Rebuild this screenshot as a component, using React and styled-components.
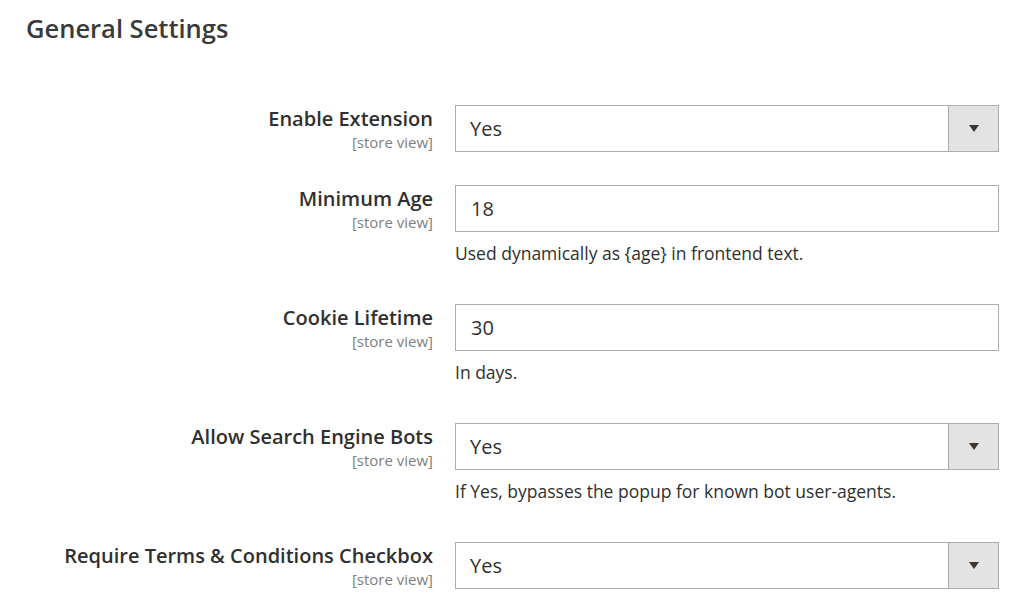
import React from "react";
import styled, { createGlobalStyle } from "styled-components";

const GlobalStyle = createGlobalStyle`
  body {
    margin: 0;
    background: #ffffff;
    font-family: "Open Sans", "Liberation Sans", sans-serif;
    color: #303030;
  }
`;

const fields = [
  { label: "Enable Extension", type: "select", value: "Yes" },
  {
    label: "Minimum Age",
    type: "input",
    value: "18",
    note: "Used dynamically as {age} in frontend text.",
  },
  { label: "Cookie Lifetime", type: "input", value: "30", note: "In days." },
  {
    label: "Allow Search Engine Bots",
    type: "select",
    value: "Yes",
    note: "If Yes, bypasses the popup for known bot user-agents.",
  },
  { label: "Require Terms & Conditions Checkbox", type: "select", value: "Yes" },
];

const SettingsPage = () => {
  return (
    <Page>
      <GlobalStyle />
      <Title>General Settings</Title>
      <Fieldset>
        {fields.map((field) => (
          <Row key={field.label}>
            <LabelCell>
              <LabelText>{field.label}</LabelText>
              <Scope>[store view]</Scope>
            </LabelCell>
            <ValueCell>
              {field.type === "select" ? (
                <SelectBox>
                  <SelectValue>{field.value}</SelectValue>
                  <ArrowButton>
                    <svg width="10" height="7" viewBox="0 0 10 7">
                      <path d="M0 0 L10 0 L5 7 Z" fill="#41362f" />
                    </svg>
                  </ArrowButton>
                </SelectBox>
              ) : (
                <TextBox>{field.value}</TextBox>
              )}
              {field.note && <Note>{field.note}</Note>}
            </ValueCell>
          </Row>
        ))}
      </Fieldset>
    </Page>
  );
};

const Page = styled.div`
  width: 1024px;
  height: 600px;
  overflow: hidden;
  box-sizing: border-box;
`;

const Title = styled.h2`
  margin: 0;
  padding: 12px 0 0 26px;
  font-size: 25.5px;
  line-height: 32px;
  font-weight: 600;
  color: #3a3a3a;
`;

const Fieldset = styled.div`
  display: flex;
  flex-direction: column;
  gap: 33px;
  padding-top: 61px;
`;

const Row = styled.div`
  display: grid;
  grid-template-columns: 433px 544px;
  column-gap: 22px;
`;

const LabelCell = styled.div`
  display: flex;
  flex-direction: column;
  align-items: flex-end;
  padding-top: 2px;
`;

const LabelText = styled.div`
  font-size: 20px;
  line-height: 24px;
  font-weight: 600;
  color: #303030;
  white-space: nowrap;
`;

const Scope = styled.div`
  margin-top: 2px;
  font-size: 15px;
  line-height: 18px;
  color: #808080;
`;

const ValueCell = styled.div`
  display: flex;
  flex-direction: column;
`;

const boxBase = `
  height: 47px;
  box-sizing: border-box;
  border: 1px solid #adadad;
  background: #ffffff;
  font-size: 20px;
  color: #303030;
`;

const SelectBox = styled.div`
  ${boxBase}
  display: flex;
  align-items: stretch;
`;

const SelectValue = styled.div`
  flex: 1;
  display: flex;
  align-items: center;
  padding-left: 14px;
`;

const ArrowButton = styled.div`
  width: 49px;
  border-left: 1px solid #adadad;
  background: #e3e3e3;
  display: flex;
  align-items: center;
  justify-content: center;
`;

const TextBox = styled.div`
  ${boxBase}
  display: flex;
  align-items: center;
  padding-left: 15px;
`;

const Note = styled.div`
  margin: 11px 0 8px;
  font-size: 17.5px;
  line-height: 20px;
  color: #303030;
`;

export default SettingsPage;
